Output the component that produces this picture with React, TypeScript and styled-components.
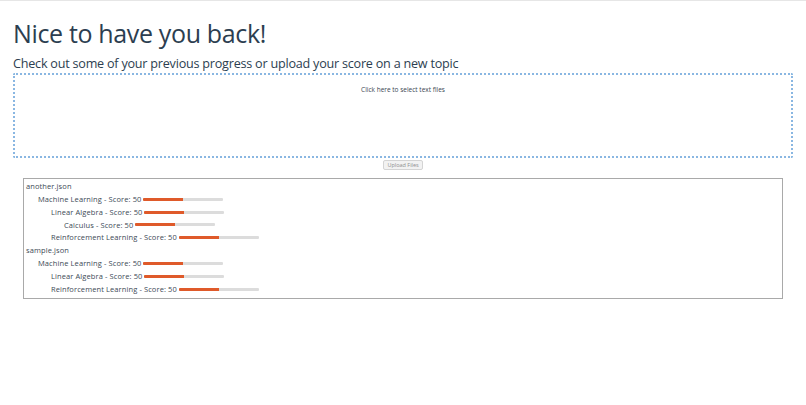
import React from "react";
import styled, { createGlobalStyle } from "styled-components";

const Global = createGlobalStyle`
  html, body { margin: 0; padding: 0; background: #fff; }
  body { font-family: "Open Sans", "Noto Sans", sans-serif; color: #2c3e50; }
`;

const Page = styled.div`
  border-top: 1px solid #e6e6e6;
  padding: 0 13px;
`;

const Title = styled.h1`
  margin: 14px 0 0;
  font-size: 25px;
  font-weight: 400;
  line-height: 36px;
  letter-spacing: -0.35px;
`;

const Subtitle = styled.h3`
  margin: 4px 0 0;
  font-size: 12.6px;
  font-weight: 400;
  line-height: 18px;
  letter-spacing: -0.22px;
`;

const DropZone = styled.div`
  border: 2px dotted #8ab7e2;
  border-radius: 2px;
  display: flex;
  justify-content: center;
  padding-top: 10px;
  box-sizing: border-box;
  height: 85px;
`;

const DropText = styled.span`
  font-size: 6.5px;
  color: #3a4652;
`;

const ButtonRow = styled.div`
  display: flex;
  justify-content: center;
  margin-top: 2px;
`;

const UploadButton = styled.button`
  font-family: inherit;
  font-size: 5.5px;
  color: #8e8e8e;
  background: #f2f2f2;
  border: 1px solid #d4d4d4;
  border-radius: 2px;
  padding: 1px 3px;
  line-height: 6px;
`;

const ListBox = styled.div`
  margin: 8px 10px 0 10px;
  border: 1px solid #a9a9a9;
  padding: 1px 2px 2px;
`;

const FileName = styled.div`
  font-size: 7.5px;
  line-height: 12.85px;
  color: #3d4a56;
  letter-spacing: 0.1px;
`;

const Row = styled.div<{ $indent: number }>`
  display: flex;
  align-items: center;
  gap: 2px;
  padding-left: ${(p) => p.$indent}px;
  font-size: 7.5px;
  line-height: 12.85px;
  color: #3d4a56;
  letter-spacing: 0.1px;
`;

const Bar = styled.div`
  width: 80px;
  height: 3px;
  background: #dcdcdc;
  border-radius: 1px;
  overflow: hidden;
  display: flex;
`;

const Fill = styled.div`
  height: 100%;
  background: #df5a2a;
`;

type Topic = { name: string; score: number; indent: number };
const files: { file: string; topics: Topic[] }[] = [
  {
    file: "another.json",
    topics: [
      { name: "Machine Learning", score: 50, indent: 12 },
      { name: "Linear Algebra", score: 50, indent: 25 },
      { name: "Calculus", score: 50, indent: 38 },
      { name: "Reinforcement Learning", score: 50, indent: 25 },
    ],
  },
  {
    file: "sample.json",
    topics: [
      { name: "Machine Learning", score: 50, indent: 12 },
      { name: "Linear Algebra", score: 50, indent: 25 },
      { name: "Reinforcement Learning", score: 50, indent: 25 },
    ],
  },
];

export default function App() {
  return (
    <>
      <Global />
      <Page>
        <Title>Nice to have you back!</Title>
        <Subtitle>Check out some of your previous progress or upload your score on a new topic</Subtitle>
        <DropZone>
          <DropText>Click here to select text files</DropText>
        </DropZone>
        <ButtonRow>
          <UploadButton disabled>Upload Files</UploadButton>
        </ButtonRow>
        <ListBox>
          {files.map((f) => (
            <React.Fragment key={f.file}>
              <FileName>{f.file}</FileName>
              {f.topics.map((t) => (
                <Row key={t.name} $indent={t.indent}>
                  <span>
                    {t.name} - Score: {t.score}
                  </span>
                  <Bar>
                    <Fill style={{ width: `${t.score}%` }} />
                  </Bar>
                </Row>
              ))}
            </React.Fragment>
          ))}
        </ListBox>
      </Page>
    </>
  );
}
